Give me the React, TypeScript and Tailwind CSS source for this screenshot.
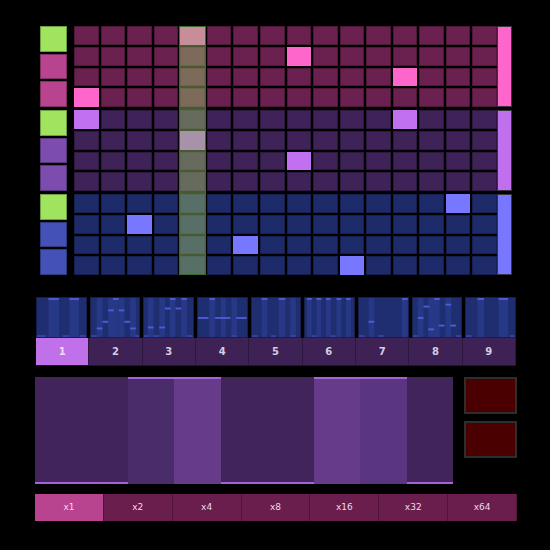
import React from 'react';

type Group = {
  cell: string;
  on: string;
  pads: string[];
  bar: string;
  hits: [number, number][];
};

const GROUPS: Group[] = [
  {
    cell: 'bg-[#6b2150] border-[#4e1639]',
    on: 'bg-[#ff66cc] border-[#ff66cc]',
    pads: ['bg-[#9fe35f]', 'bg-[#b8448f]', 'bg-[#b8448f]'],
    bar: 'bg-[#ff66cc]',
    hits: [[0, 4], [1, 8], [2, 12], [3, 0]],
  },
  {
    cell: 'bg-[#3f2257] border-[#2e1841]',
    on: 'bg-[#c070f0] border-[#c070f0]',
    pads: ['bg-[#9fe35f]', 'bg-[#7c4cae]', 'bg-[#7c4cae]'],
    bar: 'bg-[#c070ec]',
    hits: [[0, 0], [1, 4], [2, 8], [0, 12]],
  },
  {
    cell: 'bg-[#1e2b6a] border-[#15204f]',
    on: 'bg-[#7777ff] border-[#7777ff]',
    pads: ['bg-[#9fe35f]', 'bg-[#4452b8]', 'bg-[#4452b8]'],
    bar: 'bg-[#7777ff]',
    hits: [[1, 2], [0, 14], [3, 10], [2, 6]],
  },
];

// mini pattern previews: [x, y, w] notes and stripe columns [x, w]
type Mini = { notes: [number, number, number][]; stripes: [number, number][] };

const MINIS: Mini[] = [
  {
    notes: [[12, 0, 11], [34, 0, 10], [0, 39, 9], [27, 39, 7], [45, 39, 6]],
    stripes: [[12, 11], [34, 10]],
  },
  {
    notes: [[6, 31, 6], [12, 24, 6], [18, 12, 6], [23, 0, 6], [29, 12, 6], [35, 24, 6], [41, 31, 6], [0, 39, 6], [46, 39, 5]],
    stripes: [[6, 6], [18, 6], [23, 6], [29, 6], [41, 6]],
  },
  {
    notes: [[4, 30, 6], [16, 30, 6], [22, 10, 6], [27, 0, 6], [33, 10, 6], [39, 0, 6], [0, 39, 5], [10, 39, 6], [45, 39, 6]],
    stripes: [[4, 6], [16, 6], [27, 6], [39, 6]],
  },
  {
    notes: [[0, 20, 11], [12, 0, 6], [18, 20, 16], [40, 20, 11], [35, 39, 6]],
    stripes: [[12, 6], [24, 5], [35, 6]],
  },
  {
    notes: [[10, 0, 6], [28, 0, 7], [0, 39, 6], [40, 39, 6], [20, 39, 5]],
    stripes: [[10, 6], [28, 7], [40, 6]],
  },
  {
    notes: [[2, 0, 5], [12, 0, 5], [22, 0, 5], [33, 0, 5], [43, 0, 5], [7, 39, 5], [27, 39, 5]],
    stripes: [[2, 5], [12, 5], [22, 5], [33, 5], [43, 5]],
  },
  {
    notes: [[10, 24, 6], [45, 0, 6], [0, 39, 6], [20, 39, 6]],
    stripes: [[10, 6], [45, 6]],
  },
  {
    notes: [[5, 20, 6], [11, 8, 6], [16, 32, 6], [22, 0, 6], [27, 28, 6], [34, 6, 6], [39, 28, 6], [0, 39, 5], [45, 39, 6]],
    stripes: [[5, 6], [16, 6], [22, 6], [34, 6]],
  },
  {
    notes: [[12, 0, 7], [34, 0, 10], [0, 39, 6], [46, 39, 5]],
    stripes: [[12, 7], [34, 10]],
  },
];

const UNITS = [
  { bg: 'bg-[#41245a]', hi: false },
  { bg: 'bg-[#41245a]', hi: false },
  { bg: 'bg-[#4b2c6a]', hi: true },
  { bg: 'bg-[#663b8a]', hi: true },
  { bg: 'bg-[#41245a]', hi: false },
  { bg: 'bg-[#41245a]', hi: false },
  { bg: 'bg-[#663b8a]', hi: true },
  { bg: 'bg-[#5a3580]', hi: true },
  { bg: 'bg-[#41245a]', hi: false },
];

const RATES = ['x1', 'x2', 'x4', 'x8', 'x16', 'x32', 'x64'];

function StepGroup({ g }: { g: Group }) {
  return (
    <div className="flex h-[81px]">
      <div className="flex w-[27px] flex-col gap-[2px]">
        {g.pads.map((p, i) => (
          <div key={i} className={`flex-1 border border-black/30 ${p}`} />
        ))}
      </div>
      <div className="ml-[7px] grid w-[423px] grid-cols-16 grid-rows-4 gap-[2px]">
        {Array.from({ length: 64 }).map((_, i) => {
          const r = Math.floor(i / 16);
          const c = i % 16;
          const hit = g.hits.some(([hr, hc]) => hr === r && hc === c);
          return <div key={i} className={`border ${hit ? g.on : g.cell}`} />;
        })}
      </div>
      <div className={`w-[15px] border border-[#3a3440] ${g.bar}`} />
    </div>
  );
}

function MiniPattern({ m }: { m: Mini }) {
  return (
    <div className="flex-1 border border-[#15204a] bg-[#1f2e70]">
      <svg viewBox="0 0 51 41" preserveAspectRatio="none" className="block h-full w-full">
        {m.stripes.map(([x, w], i) => (
          <rect key={i} x={x} y={0} width={w} height={41} fill="#273886" />
        ))}
        {m.notes.map(([x, y, w], i) => (
          <rect key={i} x={x} y={y} width={w} height={2} fill={y >= 39 ? '#3444a4' : '#4b5cd6'} />
        ))}
      </svg>
    </div>
  );
}

export default function App() {
  return (
    <div className="h-[550px] w-[550px] overflow-hidden bg-black pl-[35px] pt-[26px] font-['DejaVu_Sans',sans-serif]">
      {/* step grid */}
      <div className="relative ml-[5px] flex w-[472px] flex-col gap-[3px]">
        {GROUPS.map((g, i) => (
          <StepGroup key={i} g={g} />
        ))}
        <div className="absolute left-[139px] top-0 h-[249px] w-[27px] border border-[#3d6b2a] bg-[#8fb364]/50" />
      </div>

      {/* pattern previews */}
      <div className="ml-[1px] mt-[22px] flex h-[41px] w-[480px] gap-[3px]">
        {MINIS.map((m, i) => (
          <MiniPattern key={i} m={m} />
        ))}
      </div>
      <div className="ml-[1px] flex h-[28px] w-[480px] border-b border-[#241232] bg-[#3f2255]">
        {Array.from({ length: 9 }).map((_, i) => (
          <div
            key={i}
            className={`flex flex-1 items-center justify-center border-r border-[#2c173f] text-[10px] font-bold ${
              i === 0 ? 'bg-[#c070e8] text-[#eadcf5]' : 'text-[#d6cce0]'
            }`}
          >
            {i + 1}
          </div>
        ))}
      </div>

      {/* wave + buttons */}
      <div className="mt-[11px] flex gap-[11px]">
        <div className="flex h-[107px] w-[418px]">
          {UNITS.map((u, i) => (
            <div
              key={i}
              className={`flex-1 ${u.bg} ${u.hi ? 'border-t-2 border-[#a663d8]' : 'border-b-2 border-[#a663d8]'}`}
            />
          ))}
        </div>
        <div className="flex flex-col gap-[7px]">
          <div className="h-[37px] w-[53px] border-2 border-[#2e2e2e] bg-[#4a0000]" />
          <div className="h-[37px] w-[53px] border-2 border-[#2e2e2e] bg-[#4a0000]" />
        </div>
      </div>

      {/* rate selector */}
      <div className="mt-[10px] flex h-[27px] w-[482px] bg-[#6a1e4e]">
        {RATES.map((r, i) => (
          <div
            key={r}
            className={`flex flex-1 items-center justify-center border-r border-[#521339] text-[9px] text-[#ecdcea] ${
              i === 0 ? 'bg-[#b8448f]' : ''
            }`}
          >
            {r}
          </div>
        ))}
      </div>
    </div>
  );
}
